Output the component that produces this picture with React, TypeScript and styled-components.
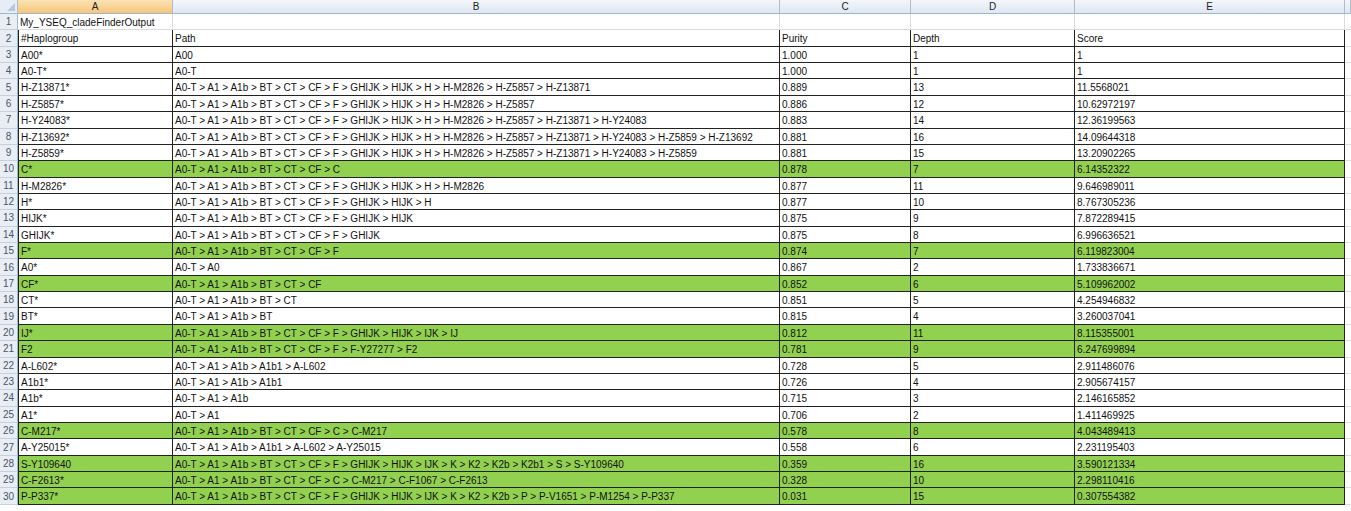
import React from "react";
import styled, { createGlobalStyle } from "styled-components";

const G = createGlobalStyle`
  body { margin: 0; background: #fff; font-family: "Liberation Sans", Arial, sans-serif; }
`;

const cols = "18px 155px 607px 131px 164px 270px 6px";

const Sheet = styled.div`
  display: grid;
  grid-template-columns: ${cols};
  grid-template-rows: 14px repeat(30, 16.37px);
  width: 1351px;
`;

const ColHead = styled.div<{ $sel?: boolean }>`
  background: ${(p) => (p.$sel ? "linear-gradient(#fbe3b5,#f6c57a)" : "linear-gradient(#f3f6fb,#dfe7f2)")};
  border-right: 1px solid #b1bccb;
  border-bottom: 1px solid #9eb6ce;
  font-size: 10px;
  color: #222;
  display: flex;
  align-items: center;
  justify-content: center;
`;

const Corner = styled(ColHead)`
  background: #e6edf6;
  position: relative;
  &::after {
    content: "";
    position: absolute;
    right: 2px;
    bottom: 2px;
    border-left: 8px solid transparent;
    border-bottom: 8px solid #b8c7da;
  }
`;

const RowHead = styled.div<{ $sel?: boolean }>`
  background: ${(p) => (p.$sel ? "#f8d9a2" : "#e9eef5")};
  border-bottom: 1px solid #c5d1e0;
  border-right: 1px solid #9eb6ce;
  font-size: 10px;
  color: #4a5568;
  display: flex;
  align-items: center;
  justify-content: center;
  box-sizing: border-box;
`;

const Cell = styled.div<{ $green?: boolean; $table?: boolean; $first?: boolean; $last?: boolean }>`
  box-sizing: border-box;
  background: ${(p) => (p.$green ? "#92d050" : "#fff")};
  border-right: 1px solid ${(p) => (p.$table ? "#222" : "#dadcdd")};
  border-bottom: 1px solid ${(p) => (p.$table ? "#222" : "#dadcdd")};
  border-left: ${(p) => (p.$first && p.$table ? "1px solid #222" : "none")};
  ${(p) => (p.$table && p.$first ? "" : "")}
  font-size: 10px;
  color: #111;
  padding: 2px 2px 0 2px;
  white-space: nowrap;
  overflow: visible;
  line-height: 13px;
`;

const Pad = styled.div`
  border-bottom: 1px solid #dadcdd;
`;

const data: [string, string, string, string, string, boolean][] = [
  ["#Haplogroup", "Path", "Purity", "Depth", "Score", false],
  ["A00*", "A00", "1.000", "1", "1", false],
  ["A0-T*", "A0-T", "1.000", "1", "1", false],
  ["H-Z13871*", "A0-T > A1 > A1b > BT > CT > CF > F > GHIJK > HIJK > H > H-M2826 > H-Z5857 > H-Z13871", "0.889", "13", "11.5568021", false],
  ["H-Z5857*", "A0-T > A1 > A1b > BT > CT > CF > F > GHIJK > HIJK > H > H-M2826 > H-Z5857", "0.886", "12", "10.62972197", false],
  ["H-Y24083*", "A0-T > A1 > A1b > BT > CT > CF > F > GHIJK > HIJK > H > H-M2826 > H-Z5857 > H-Z13871 > H-Y24083", "0.883", "14", "12.36199563", false],
  ["H-Z13692*", "A0-T > A1 > A1b > BT > CT > CF > F > GHIJK > HIJK > H > H-M2826 > H-Z5857 > H-Z13871 > H-Y24083 > H-Z5859 > H-Z13692", "0.881", "16", "14.09644318", false],
  ["H-Z5859*", "A0-T > A1 > A1b > BT > CT > CF > F > GHIJK > HIJK > H > H-M2826 > H-Z5857 > H-Z13871 > H-Y24083 > H-Z5859", "0.881", "15", "13.20902265", false],
  ["C*", "A0-T > A1 > A1b > BT > CT > CF > C", "0.878", "7", "6.14352322", true],
  ["H-M2826*", "A0-T > A1 > A1b > BT > CT > CF > F > GHIJK > HIJK > H > H-M2826", "0.877", "11", "9.646989011", false],
  ["H*", "A0-T > A1 > A1b > BT > CT > CF > F > GHIJK > HIJK > H", "0.877", "10", "8.767305236", false],
  ["HIJK*", "A0-T > A1 > A1b > BT > CT > CF > F > GHIJK > HIJK", "0.875", "9", "7.872289415", false],
  ["GHIJK*", "A0-T > A1 > A1b > BT > CT > CF > F > GHIJK", "0.875", "8", "6.996636521", false],
  ["F*", "A0-T > A1 > A1b > BT > CT > CF > F", "0.874", "7", "6.119823004", true],
  ["A0*", "A0-T > A0", "0.867", "2", "1.733836671", false],
  ["CF*", "A0-T > A1 > A1b > BT > CT > CF", "0.852", "6", "5.109962002", true],
  ["CT*", "A0-T > A1 > A1b > BT > CT", "0.851", "5", "4.254946832", false],
  ["BT*", "A0-T > A1 > A1b > BT", "0.815", "4", "3.260037041", false],
  ["IJ*", "A0-T > A1 > A1b > BT > CT > CF > F > GHIJK > HIJK > IJK > IJ", "0.812", "11", "8.115355001", true],
  ["F2", "A0-T > A1 > A1b > BT > CT > CF > F > F-Y27277 > F2", "0.781", "9", "6.247699894", true],
  ["A-L602*", "A0-T > A1 > A1b > A1b1 > A-L602", "0.728", "5", "2.911486076", false],
  ["A1b1*", "A0-T > A1 > A1b > A1b1", "0.726", "4", "2.905674157", false],
  ["A1b*", "A0-T > A1 > A1b", "0.715", "3", "2.146165852", false],
  ["A1*", "A0-T > A1", "0.706", "2", "1.411469925", false],
  ["C-M217*", "A0-T > A1 > A1b > BT > CT > CF > C > C-M217", "0.578", "8", "4.043489413", true],
  ["A-Y25015*", "A0-T > A1 > A1b > A1b1 > A-L602 > A-Y25015", "0.558", "6", "2.231195403", false],
  ["S-Y109640", "A0-T > A1 > A1b > BT > CT > CF > F > GHIJK > HIJK > IJK > K > K2 > K2b > K2b1 > S > S-Y109640", "0.359", "16", "3.590121334", true],
  ["C-F2613*", "A0-T > A1 > A1b > BT > CT > CF > C > C-M217 > C-F1067 > C-F2613", "0.328", "10", "2.298110416", true],
  ["P-P337*", "A0-T > A1 > A1b > BT > CT > CF > F > GHIJK > HIJK > IJK > K > K2 > K2b > P > P-V1651 > P-M1254 > P-P337", "0.031", "15", "0.307554382", true],
];

export default function App() {
  return (
    <>
      <G />
      <Sheet>
        <Corner />
        <ColHead $sel>A</ColHead>
        <ColHead>B</ColHead>
        <ColHead>C</ColHead>
        <ColHead>D</ColHead>
        <ColHead>E</ColHead>
        <ColHead />
        <RowHead>1</RowHead>
        <Cell>My_YSEQ_cladeFinderOutput</Cell>
        <Cell />
        <Cell />
        <Cell />
        <Cell />
        <Pad />
        {data.map((r, i) => (
          <React.Fragment key={i}>
            <RowHead>{i + 2}</RowHead>
            {r.slice(0, 5).map((v, j) => (
              <Cell key={j} $table $first={j === 0} $green={r[5] as boolean}>
                {v as string}
              </Cell>
            ))}
            <Pad />
          </React.Fragment>
        ))}
      </Sheet>
    </>
  );
}
